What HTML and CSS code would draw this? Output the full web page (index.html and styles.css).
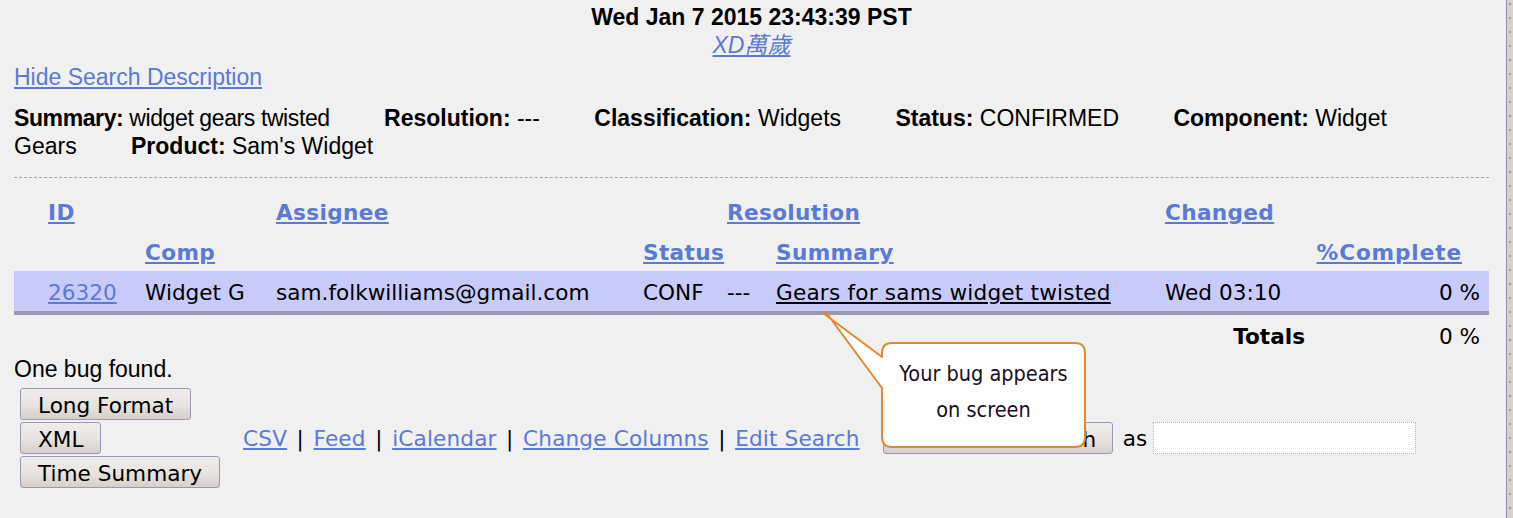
FILE: index.html
```html
<!DOCTYPE html>
<html>
<head>
<meta charset="utf-8">
<title>Bug List</title>
<link rel="stylesheet" href="styles.css">
</head>
<body>
<div class="frame">
  <main class="page">
    <div class="query-head">
      <div class="timestamp">Wed Jan 7 2015 23:43:39 PST</div>
      <div class="quip"><a href="#">XD萬歲</a></div>
    </div>
    <div class="toggle"><a href="#">Hide Search Description</a></div>
    <ul class="search-desc">
      <li class="tight"><strong>Summary:</strong> widget gears twisted</li>
      <li><strong>Resolution:</strong> ---</li>
      <li><strong>Classification:</strong> Widgets</li>
      <li><strong>Status:</strong> CONFIRMED</li>
      <li><strong>Component:</strong> Widget Gears</li>
      <li><strong>Product:</strong> Sam's Widget</li>
    </ul>
    <hr class="sep">
    <div class="buglist">
      <div class="row head">
        <a href="#">ID</a>
        <span></span>
        <a href="#">Assignee</a>
        <span></span>
        <a href="#" class="wide">Resolution</a>
        <a href="#" class="wide">Changed</a>
      </div>
      <div class="row head">
        <span></span>
        <a href="#">Comp</a>
        <span></span>
        <a href="#">Status</a>
        <span></span>
        <a href="#">Summary</a>
        <span></span>
        <a href="#" class="pct-head">%Complete</a>
      </div>
      <div class="row data">
        <a href="#">26320</a>
        <span>Widget G</span>
        <span>sam.folkwilliams@gmail.com</span>
        <span>CONF</span>
        <span>---</span>
        <a href="#" class="summary-link">Gears for sams widget twisted</a>
        <span>Wed 03:10</span>
        <span class="num">0 %</span>
      </div>
      <div class="row totals">
        <span class="total-label">Totals</span>
        <span class="num">0 %</span>
      </div>
    </div>
    <p class="count">One bug found.</p>
    <div class="actions">
      <div class="formats">
        <button class="btn">Long Format</button>
        <button class="btn">XML</button>
        <button class="btn">Time Summary</button>
      </div>
      <div class="links">
        <a href="#">CSV</a> <span class="bar">|</span> <a href="#">Feed</a> <span class="bar">|</span> <a href="#">iCalendar</a> <span class="bar">|</span> <a href="#">Change Columns</a> <span class="bar">|</span> <a href="#">Edit Search</a>
      </div>
      <button class="btn remember">Remember search</button>
      <span class="as">as</span>
      <input class="name-input" type="text">
    </div>
  </main>
  <div class="scrollframe"></div>

  <div class="callout">
    <svg class="callout-shape" width="270" height="142" viewBox="0 0 270 142">
      <path d="M3 3 L62 47 L62 43 Q62 33 72 33 L255 33 Q265 33 265 43 L265 127 Q265 137 255 137 L72 137 Q62 137 62 127 L62 78 L8 5 Z" fill="#ffffff" stroke="#e0892e" stroke-width="2" stroke-linejoin="round"/>
    </svg>
    <div class="callout-text">Your bug appears<br>on screen</div>
  </div>
</div>
</body>
</html>
```

FILE: styles.css
```css
html, body {
  margin: 0;
  padding: 0;
}

body {
  background: #f0f0f0;
  font-family: "Liberation Sans", Arial, sans-serif;
  font-size: 23px;
  color: #000;
  overflow: hidden;
}

a {
  color: #5a7ad6;
}

.frame {
  display: flex;
  height: 518px;
  position: relative;
}

.page {
  flex: 1;
  min-width: 0;
  padding: 3px 17px 0 14px;
}

.scrollframe {
  width: 6px;
  border-left: 1px solid #8e8eaa;
  background-color: #d9d1c7;
  background-image: radial-gradient(circle at 3px 4px, #9a9ab8 0.9px, transparent 1.3px);
  background-size: 6px 14px;
}

.timestamp {
  text-align: center;
  font-weight: bold;
  line-height: 28px;
}

.quip {
  text-align: center;
  line-height: 28px;
  font-style: italic;
}

.quip a {
  font-family: "Liberation Sans", "Noto Sans CJK TC", sans-serif;
}

.toggle {
  margin-top: 4px;
  line-height: 28px;
}

.search-desc {
  list-style: none;
  margin: 13px 0 0;
  padding: 0;
  line-height: 28px;
}

.search-desc li {
  display: inline;
  padding-right: 48px;
}

.search-desc .tight {
  letter-spacing: -0.4px;
}

.sep {
  border: 0;
  border-top: 1px dashed #a4a4b8;
  margin: 17px 0 0;
  height: 0;
}

.buglist {
  margin-top: 13px;
  font-family: "DejaVu Sans", Verdana, sans-serif;
  font-size: 21.6px;
}

.row {
  display: grid;
  grid-template-columns: 97px 131px 367px 84px 49px 389px 140px 175px;
  padding: 3px 9px 0 34px;
  height: 40px;
  box-sizing: border-box;
  line-height: 37px;
  white-space: nowrap;
}

.head a {
  font-weight: bold;
  letter-spacing: 0.35px;
}

.wide {
  grid-column: span 2;
}

.head .pct-head {
  text-align: right;
  padding-right: 18px;
  letter-spacing: 0.9px;
}

.data {
  background: #c8cbfa;
  border-bottom: 4px solid #9a9aac;
  height: 44px;
}

.summary-link {
  color: #000;
  letter-spacing: 0.2px;
}

.num {
  text-align: right;
}

.total-label {
  grid-column: 7;
  font-weight: bold;
  text-align: right;
}

.count {
  margin: 0;
  line-height: 28px;
}

.actions {
  display: flex;
  align-items: center;
  margin-top: 5px;
  font-family: "DejaVu Sans", Verdana, sans-serif;
  font-size: 21.6px;
}

.formats {
  display: flex;
  flex-direction: column;
  align-items: flex-start;
  gap: 2px;
  padding-left: 6px;
}

.btn {
  font-family: "DejaVu Sans", Verdana, sans-serif;
  font-size: 21.6px;
  color: #000;
  height: 32px;
  padding: 2px 17px 0;
  margin: 0;
  border: 1px solid #9a9ab8;
  border-radius: 3px;
  background: linear-gradient(#efedec, #e7e3e0 55%, #d6cec9);
}

.links {
  margin-left: 23px;
  white-space: nowrap;
  letter-spacing: 0.15px;
}

.bar {
  padding: 0 2.5px;
}

.remember {
  margin-left: 23px;
  width: 230px;
  padding: 2px 10px 0;
}

.as {
  margin: 0 6px 0 10px;
}

.name-input {
  width: 263px;
  height: 32px;
  box-sizing: border-box;
  border: 1px dotted #b4b4c8;
  background: #fff;
  margin: 0;
}

.callout {
  position: absolute;
  left: 820px;
  top: 310px;
  width: 270px;
  height: 142px;
}

.callout-shape {
  display: block;
}

.callout-text {
  position: absolute;
  left: 62px;
  top: 33px;
  width: 203px;
  padding-top: 13px;
  text-align: center;
  font-family: "DejaVu Sans Condensed", "Liberation Sans Narrow", sans-serif;
  font-stretch: condensed;
  font-size: 21.5px;
  line-height: 36px;
  color: #1a1020;
}
```
